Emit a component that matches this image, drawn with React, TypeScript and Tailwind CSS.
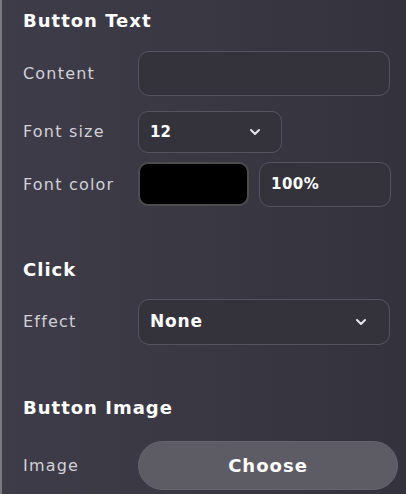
import { ChevronDown } from 'lucide-react';

function Label({ children }: { children: string }) {
  return (
    <span className="w-[115px] shrink-0 text-[16px] tracking-[1.2px] text-[#d2d1d8]">{children}</span>
  );
}

function Row({ label, children }: { label: string; children: React.ReactNode }) {
  return (
    <div className="flex items-center">
      <Label>{label}</Label>
      {children}
    </div>
  );
}

export default function App() {
  return (
    <div
      className="flex h-[494px] w-[406px] border-l-2 border-[#7b7a82] bg-gradient-to-r from-[#3e3c48] to-[#34333d] pl-[21px] text-white"
      style={{ fontFamily: '"DejaVu Sans", "Noto Sans", sans-serif' }}
    >
      <div className="flex w-full flex-col">
        <h2 className="mt-[10px] text-[18px] font-bold leading-[22px] tracking-[1px]">Button Text</h2>

        <div className="mt-[19px] flex flex-col">
          <Row label="Content">
            <div className="h-[45px] w-[252px] rounded-[11px] border-[1.5px] border-[#55545e] bg-[#34333c]" />
          </Row>
          <div className="mt-[15px]">
            <Row label="Font size">
              <div className="flex h-[42px] w-[144px] items-center justify-between rounded-[10px] border-[1.5px] border-[#55545e] bg-[#34333c] pl-[11px] pr-[18px]">
                <span className="text-[15px] font-bold">12</span>
                <ChevronDown size={16} strokeWidth={3} className="text-[#e6e6ea]" />
              </div>
            </Row>
          </div>
          <div className="mt-[9px]">
            <Row label="Font color">
              <div className="flex gap-[10px]">
                <div className="h-[44px] w-[111px] rounded-[10px] border-[2px] border-[#4c4b50] bg-black" />
                <div className="flex h-[45px] w-[132px] items-center rounded-[11px] border-[1.5px] border-[#55545e] bg-[#34333c] pl-[11px]">
                  <span className="text-[15px] font-bold tracking-[0.5px]">100%</span>
                </div>
              </div>
            </Row>
          </div>
        </div>

        <h2 className="mt-[52px] text-[18px] font-bold leading-[22px] tracking-[1px]">Click</h2>
        <div className="mt-[18px]">
          <Row label="Effect">
            <div className="flex h-[46px] w-[252px] items-center justify-between rounded-[11px] border-[1.5px] border-[#55545e] bg-[#34333c] pl-[11px] pr-[20px]">
              <span className="text-[17px] font-bold tracking-[0.8px]">None</span>
              <ChevronDown size={16} strokeWidth={3} className="text-[#e6e6ea]" />
            </div>
          </Row>
        </div>

        <h2 className="mt-[52px] text-[18px] font-bold leading-[22px] tracking-[1px]">Button Image</h2>
        <div className="mt-[22px]">
          <Row label="Image">
            <button className="h-[49px] w-[260px] rounded-full border-[1.5px] border-[#66656e] bg-[#5d5c64] text-[18px] font-bold tracking-[1px] text-white">
              Choose
            </button>
          </Row>
        </div>
      </div>
    </div>
  );
}
